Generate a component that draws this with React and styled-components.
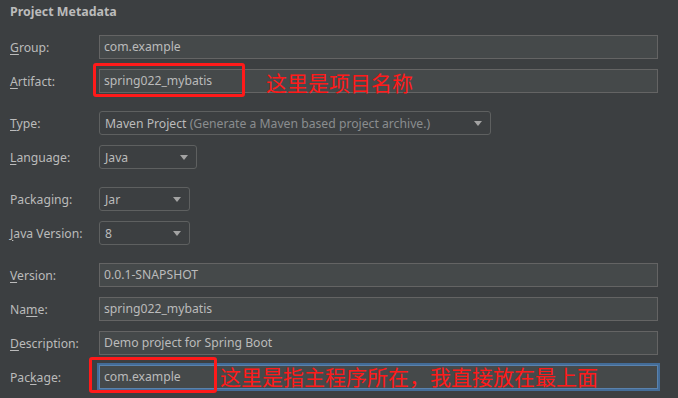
import React from 'react'
import styled, { createGlobalStyle } from 'styled-components'

const GlobalStyle = createGlobalStyle`
  html, body {
    margin: 0;
    padding: 0;
    background: #3c3f41;
  }
  body {
    font-family: "Noto Sans", "Open Sans", sans-serif;
  }
`

const Panel = styled.div`
  width: 678px;
  height: 398px;
  box-sizing: border-box;
  padding: 0 20px 0 10px;
  background: #3c3f41;
  overflow: hidden;
`

const Title = styled.div`
  height: 24px;
  line-height: 24px;
  font-size: 12.4px;
  font-weight: bold;
  color: #bbbbbb;
`

const Row = styled.div`
  display: flex;
  align-items: center;
  height: 24px;
  margin-top: ${p => p.$gap}px;
`

const Label = styled.div`
  width: 89px;
  flex: none;
  font-size: 12.2px;
  color: #bbbbbb;
  white-space: nowrap;
`

const Key = styled.span`
  text-decoration: underline;
  text-underline-offset: 2px;
`

const FieldWrap = styled.div`
  position: relative;
  flex: 1;
  height: 24px;
`

const Field = styled.div`
  box-sizing: border-box;
  height: 24px;
  padding: 0 4px;
  line-height: 22px;
  font-size: 12.2px;
  color: #bbbbbb;
  background: #45494a;
  border: 1px solid ${p => (p.$focused ? '#5a82ad' : '#646464')};
  box-shadow: ${p => (p.$focused ? '0 0 0 2px #436c98' : 'none')};
`

const Select = styled.div`
  box-sizing: border-box;
  display: flex;
  align-items: center;
  justify-content: space-between;
  width: ${p => p.$width}px;
  height: 24px;
  padding: 0 8px 0 5px;
  font-size: 12.2px;
  color: #bbbbbb;
  border: 1px solid #5e6060;
  border-radius: 3px;
  white-space: nowrap;
`

const Hint = styled.span`
  color: #8a8d8f;
`

const Arrow = styled.span`
  width: 0;
  height: 0;
  border-left: 4px solid transparent;
  border-right: 4px solid transparent;
  border-top: 5px solid #a3a3a3;
`

const Mark = styled.div`
  position: absolute;
  left: ${p => p.$left}px;
  top: ${p => p.$top}px;
  width: ${p => p.$w}px;
  height: ${p => p.$h}px;
  box-sizing: border-box;
  border: 3px solid #ff1a1a;
  border-radius: 3px;
  pointer-events: none;
`

const Note = styled.div`
  position: absolute;
  left: ${p => p.$left}px;
  top: ${p => p.$top}px;
  font-family: "Noto Sans CJK SC", sans-serif;
  font-size: 21px;
  line-height: 24px;
  color: #ff1a1a;
  white-space: nowrap;
`

const TextRow = ({ gap, label, k, value, children, focused }) => {
  const i = label.indexOf(k)
  return (
    <Row $gap={gap}>
      <Label>
        {label.slice(0, i)}
        <Key>{k}</Key>
        {label.slice(i + 1)}
      </Label>
      <FieldWrap>
        <Field $focused={focused}>{value}</Field>
        {children}
      </FieldWrap>
    </Row>
  )
}

const SelectRow = ({ gap, label, k, width, children }) => {
  const i = label.indexOf(k)
  return (
    <Row $gap={gap}>
      <Label>
        {label.slice(0, i)}
        <Key>{k}</Key>
        {label.slice(i + 1)}
      </Label>
      <Select $width={width}>
        <span>{children}</span>
        <Arrow />
      </Select>
    </Row>
  )
}

export default function App() {
  return (
    <Panel>
      <GlobalStyle />
      <Title>Project Metadata</Title>
      <TextRow gap={11} label="Group:" k="G" value="com.example" />
      <TextRow gap={10} label="Artifact:" k="A" value="spring022_mybatis">
        <Mark $left={-6} $top={-6} $w={152} $h={34} />
        <Note $left={167} $top={1}>这里是项目名称</Note>
      </TextRow>
      <SelectRow gap={18} label="Type:" k="T" width={392}>
        Maven Project <Hint>(Generate a Maven based project archive.)</Hint>
      </SelectRow>
      <SelectRow gap={10} label="Language:" k="L" width={98}>Java</SelectRow>
      <SelectRow gap={18} label="Packaging:" k="g" width={91}>Jar</SelectRow>
      <SelectRow gap={10} label="Java Version:" k="J" width={91}>8</SelectRow>
      <TextRow gap={18} label="Version:" k="V" value="0.0.1-SNAPSHOT" />
      <TextRow gap={10} label="Name:" k="m" value="spring022_mybatis" />
      <TextRow gap={10} label="Description:" k="D" value="Demo project for Spring Boot" />
      <TextRow gap={10} label="Package:" k="k" value="com.example" focused>
        <Mark $left={-10} $top={-8} $w={128} $h={36} />
        <Note $left={121} $top={-1}>这里是指主程序所在，我直接放在最上面</Note>
      </TextRow>
    </Panel>
  )
}
